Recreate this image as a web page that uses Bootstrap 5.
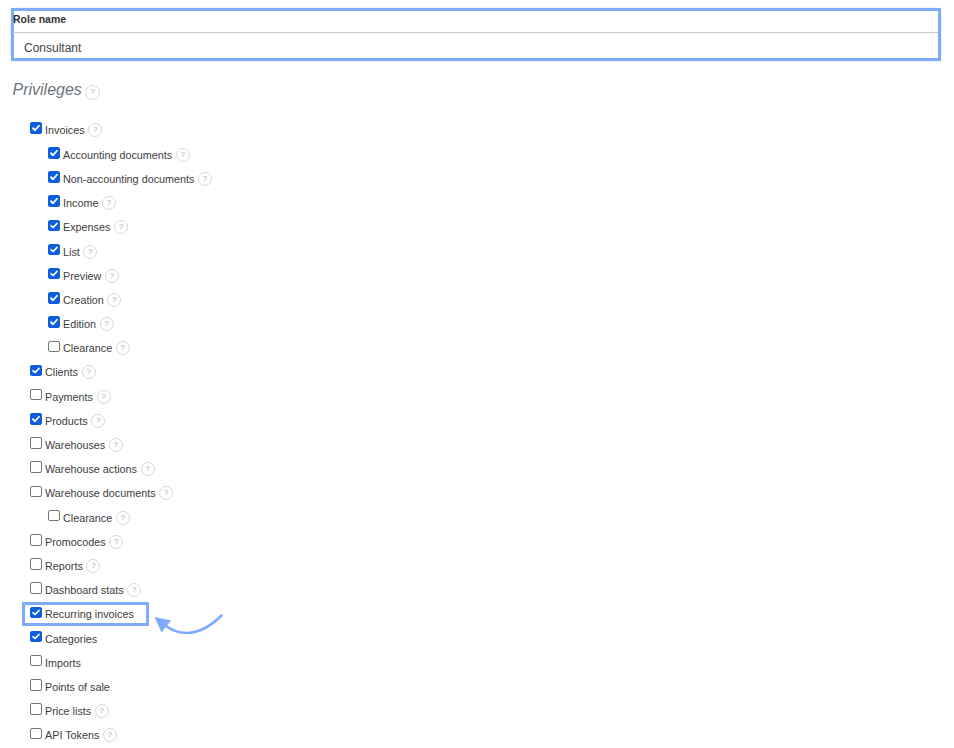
<!DOCTYPE html>
<html lang="en">
<head>
<meta charset="utf-8">
<title>Role</title>
<link href="https://cdn.jsdelivr.net/npm/bootstrap@5.3.0/dist/css/bootstrap.min.css" rel="stylesheet">
<style>
html,body{height:748px;overflow:hidden;background:#fff}
body{font-family:"Liberation Sans",Arial,sans-serif;font-size:10.8px;color:#3d3d3d;position:relative}
.page-wrap{padding:8px 13px 0 11px}
.name-box{border:3px solid #7eabff;height:53px;box-shadow:0 0 1px #a8c4ff}
.name-label{font-weight:700;font-size:10.5px;height:22px;line-height:17px;border-bottom:1px solid #c8c8c8;margin-left:-1px;color:#333}
.name-value{font-size:12px;padding-left:10px;line-height:30px;color:#444}
.priv-head{margin:18px 0 0 1.500px;height:21px}
.priv-title{font-size:16px;font-style:italic;color:#6c757d;line-height:21px}
.priv-list{margin-top:18.5px;margin-left:19px}
.priv-row{height:24.2px;display:flex;align-items:center;gap:3.5px}
.priv-row:first-child{height:23.7px;margin-top:-.5px;margin-bottom:1px}
.priv-row.sub{padding-left:18px}
.priv-row .form-check-input{width:11.5px;height:11.5px;margin:-4px 0 0 0;flex:none;border-color:#777;border-radius:2px}
.priv-row .form-check-input:checked{background-color:#0d5ddf;border-color:#0d5ddf;background-size:100% 100%;background-image:url("data:image/svg+xml,%3csvg xmlns='http://www.w3.org/2000/svg' viewBox='0 0 20 20'%3e%3cpath fill='none' stroke='%23fff' stroke-linecap='round' stroke-linejoin='round' stroke-width='3.6' d='m4 10.500 4 4 8-9'/%3e%3c/svg%3e")}
.priv-row label{line-height:14px;margin:0}
.hint{display:inline-flex;align-items:center;justify-content:center;width:15px;height:15px;border:1px solid #d8d8d8;border-radius:50%;font-size:8px;line-height:1;color:#aaa;flex:none}
.priv-row .hint{width:14px;height:14px}
.priv-title + .hint{margin-left:3px;vertical-align:1px}
.mark-box{outline:3px solid #7eabff;margin-left:-5px;padding-left:5px;height:18px;width:121px;margin-top:3px;margin-bottom:3.2px}
.curve-arrow{position:absolute;left:150px;top:608px}
</style>
</head>
<body>
<div class="page-wrap">
  <div class="name-box">
    <div class="name-label">Role name</div>
    <div class="name-value">Consultant</div>
  </div>
  <div class="priv-head"><span class="priv-title">Privileges</span><span class="hint">?</span></div>
  <div class="priv-list" id="plist"></div>
</div>
<svg class="curve-arrow" width="76" height="32" viewBox="150 608 76 32" fill="none">
  <path d="M221.5 615.5C212 625 201 632.5 187 633C178 633 171 630 165 625" stroke="#7eabff" stroke-width="2.6" stroke-linecap="round"/>
  <path d="M154.5 617L171 620.5L161.500 632.500Z" fill="#7eabff"/>
</svg>
<script>
var items=[
["Invoices",1,0,1],["Accounting documents",1,1,1],["Non-accounting documents",1,1,1],["Income",1,1,1],["Expenses",1,1,1],["List",1,1,1],["Preview",1,1,1],["Creation",1,1,1],["Edition",1,1,1],["Clearance",0,1,1],
["Clients",1,0,1],["Payments",0,0,1],["Products",1,0,1],["Warehouses",0,0,1],["Warehouse actions",0,0,1],["Warehouse documents",0,0,1],["Clearance",0,1,1],["Promocodes",0,0,1],["Reports",0,0,1],["Dashboard stats",0,0,1],
["Recurring invoices",1,0,0,1],["Categories",1,0,0],["Imports",0,0,0],["Points of sale",0,0,0],["Price lists",0,0,1],["API Tokens",0,0,1]];
var h="";
items.forEach(function(it,i){
  var id="p"+i;
  h+='<div class="priv-row'+(it[2]?' sub':'')+(it[4]?' mark-box':'')+'"><input class="form-check-input" type="checkbox" id="'+id+'"'+(it[1]?' checked':'')+'><label for="'+id+'">'+it[0]+'</label>'+(it[3]?'<span class="hint">?</span>':'')+'</div>';
});
document.getElementById("plist").innerHTML=h;
</script>
<script src="https://cdn.jsdelivr.net/npm/bootstrap@5.3.0/dist/js/bootstrap.bundle.min.js"></script>
</body>
</html>
